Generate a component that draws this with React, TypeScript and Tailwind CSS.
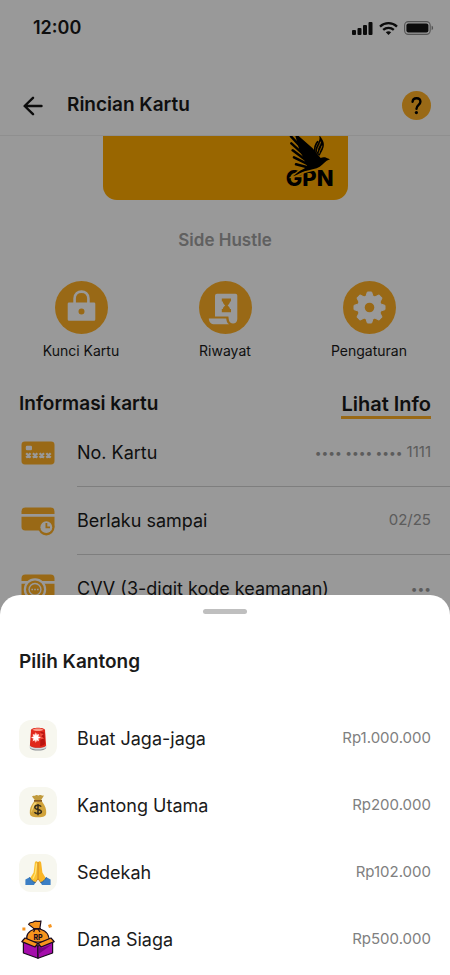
import { ReactNode } from "react"

interface IRow {
    icon: ReactNode
    name: string
    value: string
    hidden?: string
}

const SignalIcon = () => (
    <svg width="21" height="13" viewBox="0 0 21 13" fill="#141414" aria-hidden="true">
        <rect x="0" y="8" width="4" height="5" rx="1" />
        <rect x="5.5" y="6" width="4" height="7" rx="1" />
        <rect x="11" y="3" width="4" height="10" rx="1" />
        <rect x="16.5" y="0" width="4" height="13" rx="1" />
    </svg>
)

const WifiIcon = () => (
    <svg width="19" height="13" viewBox="0 0 19 13" fill="none" stroke="#141414" strokeWidth="2.3" aria-hidden="true">
        <path d="M1 4.6C5.8 0 13.2 0 18 4.6" />
        <path d="M4.2 7.9C7.2 5.1 11.8 5.1 14.8 7.9" />
        <path d="M9.5 13L6.8 10.3C8.3 8.9 10.7 8.9 12.2 10.3Z" fill="#141414" stroke="none" />
    </svg>
)

const BatteryIcon = () => (
    <svg width="30" height="14" viewBox="0 0 30 14" aria-hidden="true">
        <rect x="0.6" y="0.6" width="25.6" height="12.8" rx="3.8" fill="none" stroke="#8c8c8c" strokeWidth="1.1" />
        <rect x="2.4" y="2.4" width="22" height="9.2" rx="2" fill="#141414" />
        <path d="M27.6 4.8C29.6 5.4 29.6 8.6 27.6 9.2Z" fill="#8c8c8c" />
    </svg>
)

const BackIcon = () => (
    <svg width="20" height="20" viewBox="0 0 20 20" fill="none" stroke="#141414" strokeWidth="2.4" strokeLinecap="round" strokeLinejoin="round" aria-hidden="true">
        <path d="M18.5 10H1.8M10 1.8L1.6 10L10 18.2" />
    </svg>
)

const HelpIcon = () => (
    <svg width="29" height="29" viewBox="0 0 29 29" aria-hidden="true">
        <circle cx="14.5" cy="14.5" r="14.5" fill="#ffb026" />
        <path d="M10.6 10.8C10.8 6 18.4 6 18.4 10.8C18.4 14 14.6 13.8 14.5 17.8" fill="none" stroke="#000" strokeWidth="2.4" strokeLinecap="round" />
        <circle cx="14.4" cy="21.6" r="1.6" />
    </svg>
)

const GarudaIcon = () => (
    <svg className="absolute right-0 bottom-0" width="48" height="52" viewBox="588 31 144 156" aria-hidden="true">
        <path d="M676 130C662 136 648 136 636 142C628 146 618 152 607 153C618 144 626 136 640 129Z" stroke="#ffaa00" strokeWidth="7" />
        <path d="M616 31H626L668 68L692 97C698 93 708 94 712 98L720 101L710 105C700 112 694 122 680 128C664 133 648 134 636 140C628 144 618 150 609 152C618 144 626 136 642 129L652 122L640 96L628 72Z" fill="#000" />
        <path d="M642 74L603 32M645 90L604 53M650 105L608 74M656 117L612 95M658 126L618 116" stroke="#000" strokeWidth="7.5" strokeLinecap="round" />
        <path d="M690 31C697 42 704 50 701 63C699 73 692 82 689 90C681 86 676 80 677 70C679 56 692 46 688 31Z" fill="#000" />
        <path d="M683 48C676 56 672 64 675 80" fill="none" stroke="#000" strokeWidth="5" strokeLinecap="round" />
        <path d="M692 48C690 60 682 64 682 78M696 60C694 70 688 74 687 84" fill="none" stroke="#ffaa00" strokeWidth="2.5" />
    </svg>
)

const LockIcon = () => (
    <svg width="53" height="53" viewBox="0 0 53 53" aria-hidden="true">
        <circle cx="26.5" cy="26.5" r="26.5" fill="#ffb026" />
        <path d="M19.6 23V17.5C19.6 8.3 33.4 8.3 33.4 17.5V23" fill="none" stroke="#fff" strokeWidth="2.6" />
        <path fillRule="evenodd" d="M14 21.5H39Q40.3 21.5 40.3 22.8V38.4Q40.3 39.7 39 39.7H14Q12.7 39.7 12.7 38.4V22.8Q12.7 21.5 14 21.5ZM26.5 27.4A3 3 0 1 0 26.5 33.4A3 3 0 1 0 26.5 27.4Z" fill="#fff" />
    </svg>
)

const HistoryIcon = () => (
    <svg width="53" height="53" viewBox="0 0 53 53" aria-hidden="true">
        <circle cx="26.5" cy="26.5" r="26.5" fill="#ffb026" />
        <path d="M18 12.8H36.5Q38.3 12.8 38.3 14.6V38C38.3 44 30.2 44 29.8 38.5L29.4 35.4H16V14.8Q16 12.8 18 12.8Z" fill="#fff" />
        <path d="M9.8 37.4H27.2C27.6 40 28 42 30 43.2H15.8C12 43.2 10 41 9.8 37.4Z" fill="#fff" />
        <path d="M22.8 17.4H32V20.6H31C31 22.6 29.6 23.6 28.6 24.4C29.6 25.2 31 26.4 31 28H32V31.2H22.8V28H23.8C23.8 26.4 25.2 25.2 26.2 24.4C25.2 23.6 23.8 22.6 23.8 20.6H22.8Z" fill="#ffb026" />
    </svg>
)

const GearIcon = () => (
    <svg width="53" height="53" viewBox="0 0 53 53" aria-hidden="true">
        <circle cx="26.5" cy="26.5" r="26.5" fill="#ffb026" />
        <g fill="#fff" stroke="#fff" strokeLinejoin="round" strokeWidth="1">
            <circle cx="26.5" cy="26.5" r="11.8" />
            {[0, 45, 90, 135, 180, 225, 270, 315].map((angle) => (
                <path key={angle} d="M24.4 11H28.6L31 18H22Z" transform={`rotate(${angle} 26.5 26.5)`} />
            ))}
        </g>
        <circle cx="26.5" cy="26.5" r="4.8" fill="#ffb026" />
    </svg>
)

const CardNumberIcon = () => (
    <svg width="34" height="24" viewBox="0 0 34 24" aria-hidden="true">
        <rect x="0.5" y="0.5" width="33" height="23" rx="3.4" fill="#ffb026" />
        <rect x="4.8" y="4.8" width="6.2" height="4.4" rx="1.2" fill="#fff" />
        <path d="M5.2 12.2l4.4 4.4m0-4.4l-4.4 4.4M11.9 12.2l4.4 4.4m0-4.4l-4.4 4.4M18.6 12.2l4.4 4.4m0-4.4l-4.4 4.4M25.3 12.2l4.4 4.4m0-4.4l-4.4 4.4" stroke="#fff" strokeWidth="2.2" />
    </svg>
)

const CardDateIcon = () => (
    <svg width="34" height="29" viewBox="0 0 34 29" aria-hidden="true">
        <path d="M0.5 7V4.4Q0.5 0.6 4.3 0.6H29.7Q33.5 0.6 33.5 4.4V7Z" fill="#ffb026" />
        <path d="M0.5 9.8H33.5V20H26V23.6H4.3Q0.5 23.6 0.5 19.8Z" fill="#ffb026" />
        <circle cx="25.3" cy="20.2" r="8.2" fill="#ffb026" />
        <circle cx="25.3" cy="20.2" r="5.9" fill="#fff" />
        <path d="M25.4 16V20.4H29" fill="none" stroke="#ffb026" strokeWidth="1.8" />
    </svg>
)

const CardCvvIcon = () => (
    <svg width="34" height="30" viewBox="0 0 34 30" aria-hidden="true">
        <path d="M0.5 7V4.4Q0.5 0.6 4.3 0.6H29.7Q33.5 0.6 33.5 4.4V7Z" fill="#ffb026" />
        <path d="M0.5 9.8H33.5V20Q33.5 24 29.7 24H4.3Q0.5 24 0.5 20Z" fill="#ffb026" />
        <circle cx="14" cy="15.4" r="11.2" fill="#fff" />
        <circle cx="14" cy="15.4" r="9" fill="#ffb026" />
        <circle cx="14" cy="15.4" r="6.6" fill="#fff" />
        <circle cx="14" cy="15.4" r="5.2" fill="#ffb026" />
        <path d="M10.4 15.4h1.6m1.2 0h1.6m1.2 0h1.6" stroke="#fff" strokeWidth="1.5" />
    </svg>
)

const SirenIcon = () => (
    <svg width="18" height="24" viewBox="0 0 20 24" preserveAspectRatio="none" aria-hidden="true">
        <path d="M1 18.5H19V21C18 24.4 2 24.4 1 21Z" fill="#8b8f94" />
        <path d="M1 18.5C4 21.6 16 21.6 19 18.5V20.4C16 23.2 4 23.2 1 20.4Z" fill="#d6d9dc" />
        <path d="M2.2 3.2C2.6 0 17.4 0 17.8 3.2L19 18.4C17 21.6 3 21.6 1 18.4Z" fill="#e0281c" />
        <path d="M3.8 2.8C6 1 14 1 16.2 2.8C14 4.4 6 4.4 3.8 2.8Z" fill="#f99a88" />
        <path d="M13 4.6L17 5.4L17.8 17C16 18.6 14 19 12.4 19Z" fill="#b81410" />
        <path d="M12.4 6.2L16.4 7L13.4 9.2L16.8 11.6L12.6 12.4Z" fill="#f4513f" />
        <circle cx="7.8" cy="10.4" r="4" fill="#ff8f80" />
        <path d="M7.6 5L8.5 8.6L11.4 7L9.8 9.8L13.6 10.6L9.8 11.5L11.2 14.4L8.5 12.6L7.6 16L6.8 12.6L3.8 14.4L5.4 11.5L2 10.6L5.4 9.7L4 7L6.8 8.6Z" fill="#fff" />
    </svg>
)

const MoneyBagIcon = () => (
    <svg width="18" height="24" viewBox="0 0 18 24" aria-hidden="true">
        <path d="M6.2 6.4L3 2.4C4.4 1 5.4 2.4 6.4 1.4C8 0.4 9 2 10.2 1.2C11.6 0.6 12.8 2.2 15 1.6L11.8 6.4Z" fill="#c09a3c" />
        <path d="M5 7.6C1.6 12 0.6 15.6 0.8 19C1 22 3 23.2 9 23.2S17 22 17.2 19C17.4 15.6 16.4 12 13 7.6Z" fill="#d1a33a" />
        <path d="M5.6 8.6C3 12 2 15.6 2.4 19C3.4 16 5 12 8 8.6Z" fill="#f3d373" />
        <path d="M5 6H13V7.8H5Z" fill="#87591c" />
        <path d="M12.2 12.6C10.8 10.8 5.8 10.8 5.8 13.4C5.8 16 12.4 14.8 12.4 17.6C12.4 20.2 7 20.2 5.4 18.2M9 10V21.2" fill="none" stroke="#352c1b" strokeWidth="1.5" />
    </svg>
)

const PrayIcon = () => (
    <svg width="26" height="26" viewBox="0 0 26 26" aria-hidden="true">
        <path d="M12.9 2.2C12 0.6 10 1 9.8 3L8.6 12.4L5 18.6L9 23.6L12.9 19Z" fill="#fbc12f" />
        <path d="M13.1 2.2C14 0.6 16 1 16.2 3L17.4 12.4L21 18.6L17 23.6L13.1 19Z" fill="#f9b526" />
        <path d="M11.6 3.4L10.4 13.4L8 18.8" fill="none" stroke="#ffe277" strokeWidth="1.3" />
        <path d="M13 2V18.6L10 23M13 18.6L16 23" fill="none" stroke="#c87c11" strokeWidth="0.9" />
        <path d="M0.4 19.6L4.6 17.2C5.6 19.8 8 22 10.4 22.6L9 25H0.4Z" fill="#3c7fc4" />
        <path d="M25.6 19.6L21.4 17.2C20.4 19.8 18 22 15.6 22.6L17 25H25.6Z" fill="#3c7fc4" />
        <path d="M4.6 17.2C5.6 19.8 8 22 10.4 22.6M21.4 17.2C20.4 19.8 18 22 15.6 22.6" fill="none" stroke="#235d9b" strokeWidth="1" />
    </svg>
)

const DonationBoxIcon = () => (
    <svg width="34" height="39" viewBox="0 0 34 39" aria-hidden="true">
        <g stroke="#1a0b1c" strokeWidth="1.2" strokeLinejoin="round">
            <path d="M14 9C7 11 4.6 16 6.2 22H27.6C29 16 26 11 19 9Z" fill="#f7941d" />
            <path d="M13 8.6L7.6 4.4C8.6 1.4 11 3.4 13 1.6C15 0.2 17.4 2.4 20 1L18.8 8.6Z" fill="#f7941d" />
            <path d="M12.2 8.6H19.8M14 9L12.6 12M17 9L19 12" fill="none" />
            <path d="M2.4 20L17 26V38.2L2.4 33Z" fill="#a40dab" />
            <path d="M31.6 20L17 26V38.2L31.6 33Z" fill="#a40dab" />
            <path d="M4 18L17 23.4L14 27L0.8 21.6Z" fill="#f7941d" />
            <path d="M30 18L17 23.4L20 27L33.2 21.6Z" fill="#f7941d" />
        </g>
        <path d="M17.6 27L20.4 28.2L30.8 24.4L17.6 34Z" fill="#760481" />
        <text x="17" y="19.6" textAnchor="middle" fontSize="7" fontWeight="800" fill="#1a0b1c" className="font-['Inter',sans-serif]">RP</text>
        <path d="M1.4 7.6h3v3h-3zM27 5l3-1 1 3-3 1z" fill="#f7941d" />
    </svg>
)

const actions = [
    { name: "Kunci Kartu", icon: <LockIcon /> },
    { name: "Riwayat", icon: <HistoryIcon /> },
    { name: "Pengaturan", icon: <GearIcon /> },
]

const cardInfo: IRow[] = [
    { name: "No. Kartu", hidden: "•••• •••• ••••", value: "1111", icon: <CardNumberIcon /> },
    { name: "Berlaku sampai", value: "02/25", icon: <CardDateIcon /> },
    { name: "CVV (3-digit kode keamanan)", hidden: "•••", value: "", icon: <CardCvvIcon /> },
]

const pockets: IRow[] = [
    { name: "Buat Jaga-jaga", value: "Rp1.000.000", icon: <SirenIcon /> },
    { name: "Kantong Utama", value: "Rp200.000", icon: <MoneyBagIcon /> },
    { name: "Sedekah", value: "Rp102.000", icon: <PrayIcon /> },
]

const CardPage = () => {
    return (
        <div>
            <div className="flex h-14 items-center justify-between pr-4 pl-[33px]">
                <span className="text-lg font-semibold">12:00</span>
                <div className="flex items-center gap-[6px]">
                    <SignalIcon />
                    <WifiIcon />
                    <BatteryIcon />
                </div>
            </div>
            <header className="flex h-20 items-center border-b border-[#eeeeee] px-[19px] pt-5">
                <button type="button" aria-label="Kembali" className="flex w-12 pl-1"><BackIcon /></button>
                <h1 className="text-[19px] font-semibold">Rincian Kartu</h1>
                <button type="button" aria-label="Bantuan" className="ml-auto"><HelpIcon /></button>
            </header>
            <main>
                <div className="mx-auto flex h-16 w-[245px] items-end justify-end rounded-b-[14px] bg-[#ffaa00] pr-[14px] pb-3">
                    <div className="relative">
                        <p className="text-[22px] leading-5 font-extrabold text-black">GPN</p>
                        <GarudaIcon />
                    </div>
                </div>
                <p className="mt-7 text-center text-[17px] leading-6 font-semibold text-[#a0a0a0]">Side Hustle</p>
                <div className="mt-[29px] grid grid-cols-3 px-[9px]">
                    {actions.map((item) => (
                        <button key={item.name} type="button" className="flex flex-col items-center gap-[7px] text-sm leading-5">
                            {item.icon}
                            {item.name}
                        </button>
                    ))}
                </div>
                <section className="mt-[31px]">
                    <div className="flex justify-between px-[19px] leading-6 font-semibold">
                        <h2 className="text-[19px]">Informasi kartu</h2>
                        <button type="button" className="border-b-3 border-[#ffb026] text-xl leading-6">Lihat Info</button>
                    </div>
                    <ul>
                        {cardInfo.map((item) => (
                            <li key={item.name} className="group flex pl-[21px]">
                                <div className="flex w-14 items-center">{item.icon}</div>
                                <div className="flex h-[68px] flex-1 items-center justify-between border-b border-[#d2d2d2] pr-[19px] group-last:border-0">
                                    <span className="text-lg">{item.name}</span>
                                    <span className="flex items-center gap-1 text-[15px] text-[#999999]">
                                        {item.hidden && <span className="text-xs">{item.hidden}</span>}
                                        {item.value}
                                    </span>
                                </div>
                            </li>
                        ))}
                    </ul>
                </section>
            </main>
        </div>
    )
}

const PocketSheet = () => {
    return (
        <section className="absolute inset-x-0 bottom-0 rounded-t-[20px] bg-white px-[19px] pt-[14px] pb-[2px]">
            <div className="mx-auto h-[5px] w-11 rounded-full bg-[#bfbfbf]"></div>
            <h2 className="mt-[34px] text-[19px] leading-7 font-semibold">Pilih Kantong</h2>
            <ul className="mt-[29px]">
                {pockets.map((item) => (
                    <li key={item.name}>
                        <button type="button" className="flex h-[67px] w-full items-center">
                            <span className="flex size-[38px] items-center justify-center rounded-xl bg-[#f7f7ef]">{item.icon}</span>
                            <span className="ml-5 text-lg">{item.name}</span>
                            <span className="ml-auto text-[15px] text-[#808080]">{item.value}</span>
                        </button>
                    </li>
                ))}
                <li>
                    <button type="button" className="flex h-[67px] w-full items-center">
                        <span className="flex size-[38px] items-center justify-center"><DonationBoxIcon /></span>
                        <span className="ml-5 text-lg">Dana Siaga</span>
                        <span className="ml-auto text-[15px] text-[#808080]">Rp500.000</span>
                    </button>
                </li>
            </ul>
        </section>
    )
}

const App = () => {
    return (
        <div className="relative h-screen overflow-hidden bg-white font-['Inter',sans-serif] text-[#1a1a1a]">
            <CardPage />
            <div className="absolute inset-0 bg-black/40"></div>
            <PocketSheet />
        </div>
    )
}

export default App
